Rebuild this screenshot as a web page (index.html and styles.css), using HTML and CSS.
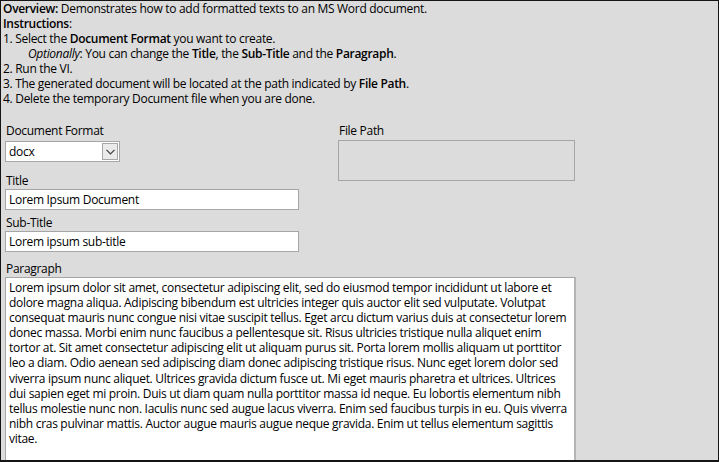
FILE: index.html
```html
<!DOCTYPE html>
<html>
<head>
<meta charset="utf-8">
<link rel="stylesheet" href="styles.css">
</head>
<body>
<div class="frame">
  <div class="intro">
    <div><b>Overview:</b> Demonstrates how to add formatted texts to an MS Word document.</div>
    <div><b>Instructions</b>:</div>
    <div>1. Select the <b>Document Format</b> you want to create.</div>
    <div class="indent"><i>Optionally</i>: You can change the <b>Title</b>, the <b>Sub-Title</b> and the <b>Paragraph</b>.</div>
    <div>2. Run the VI.</div>
    <div>3. The generated document will be located at the path indicated by <b>File Path</b>.</div>
    <div>4. Delete the temporary Document file when you are done.</div>
  </div>
  <div class="controls">
    <div class="left-col">
      <div class="label">Document Format</div>
      <div class="ring">
        <span class="ring-value">docx</span>
        <span class="ring-btn">
          <svg width="9" height="6" viewBox="0 0 9 6"><path d="M0.5 0.8 L4.5 4.8 L8.5 0.8" fill="none" stroke="#404040" stroke-width="1.2"/></svg>
        </span>
      </div>
      <div class="label label-gap">Title</div>
      <div class="field">Lorem Ipsum Document</div>
      <div class="label label-gap2">Sub-Title</div>
      <div class="field">Lorem ipsum sub-title</div>
    </div>
    <div class="right-col">
      <div class="label">File Path</div>
      <div class="path-box"></div>
    </div>
  </div>
  <div class="label para-label">Paragraph</div>
  <div class="para">
    <div>Lorem ipsum dolor sit amet, consectetur adipiscing elit, sed do eiusmod tempor incididunt ut labore et</div>
    <div>dolore magna aliqua. Adipiscing bibendum est ultricies integer quis auctor elit sed vulputate. Volutpat</div>
    <div>consequat mauris nunc congue nisi vitae suscipit tellus. Eget arcu dictum varius duis at consectetur lorem</div>
    <div>donec massa. Morbi enim nunc faucibus a pellentesque sit. Risus ultricies tristique nulla aliquet enim</div>
    <div>tortor at. Sit amet consectetur adipiscing elit ut aliquam purus sit. Porta lorem mollis aliquam ut porttitor</div>
    <div>leo a diam. Odio aenean sed adipiscing diam donec adipiscing tristique risus. Nunc eget lorem dolor sed</div>
    <div>viverra ipsum nunc aliquet. Ultrices gravida dictum fusce ut. Mi eget mauris pharetra et ultrices. Ultrices</div>
    <div>dui sapien eget mi proin. Duis ut diam quam nulla porttitor massa id neque. Eu lobortis elementum nibh</div>
    <div>tellus molestie nunc non. Iaculis nunc sed augue lacus viverra. Enim sed faucibus turpis in eu. Quis viverra</div>
    <div>nibh cras pulvinar mattis. Auctor augue mauris augue neque gravida. Enim ut tellus elementum sagittis</div>
    <div>vitae.</div>
  </div>
</div>
</body>
</html>
```

FILE: styles.css
```css
html, body {
  margin: 0;
  padding: 0;
  background: #dcdcdc;
}
body {
  font-family: "Open Sans", "Noto Sans", sans-serif;
  font-size: 12px;
  letter-spacing: -0.3px;
  color: #000;
}
.frame {
  width: 719px;
  height: 462px;
  box-sizing: border-box;
  border: 1px solid #151515;
  border-bottom-width: 2px;
  background: #dcdcdc;
  overflow: hidden;
}
.intro {
  padding: 0 0 0 2px;
  line-height: 15px;
  white-space: nowrap;
}
.intro b { font-weight: 600; }
.indent { padding-left: 25px; }
.controls {
  display: flex;
  margin-top: 17px;
  padding-left: 4px;
}
.left-col {
  width: 294px;
  display: flex;
  flex-direction: column;
  align-items: flex-start;
}
.right-col {
  margin-left: 39px;
  display: flex;
  flex-direction: column;
}
.label {
  line-height: 15px;
  height: 15px;
  padding-left: 1px;
  margin-bottom: 3px;
}
.label-gap { margin-top: 11px; margin-bottom: 1px; }
.label-gap2 { margin-top: 5px; margin-bottom: 1px; }
.ring {
  width: 115px;
  height: 21px;
  box-sizing: border-box;
  border: 1px solid #a6a6a6;
  background: #fff;
  display: flex;
  align-items: center;
  justify-content: space-between;
  padding: 0 1px 0 3px;
}
.ring-value { line-height: 15px; }
.ring-btn {
  width: 16px;
  height: 17px;
  box-sizing: border-box;
  border: 1px solid #a6a6a6;
  background: #eaeaea;
  display: flex;
  align-items: center;
  justify-content: center;
}
.field {
  width: 294px;
  height: 21px;
  box-sizing: border-box;
  border: 1px solid #a6a6a6;
  background: #fff;
  padding: 2px 3px;
  line-height: 15px;
}
.path-box {
  width: 237px;
  height: 41px;
  box-sizing: border-box;
  border: 1px solid #a6a6a6;
  margin-top: -1px;
}
.para-label {
  margin: 9px 0 1px 4px;
}
.para {
  margin-left: 4px;
  width: 571px;
  height: 200px;
  box-sizing: border-box;
  border: 1px solid #a6a6a6;
  border-right: 2px solid #b4b4b4;
  background: #fff;
  padding: 2px 3px;
  line-height: 15.1px;
  white-space: nowrap;
  overflow: hidden;
}
```
